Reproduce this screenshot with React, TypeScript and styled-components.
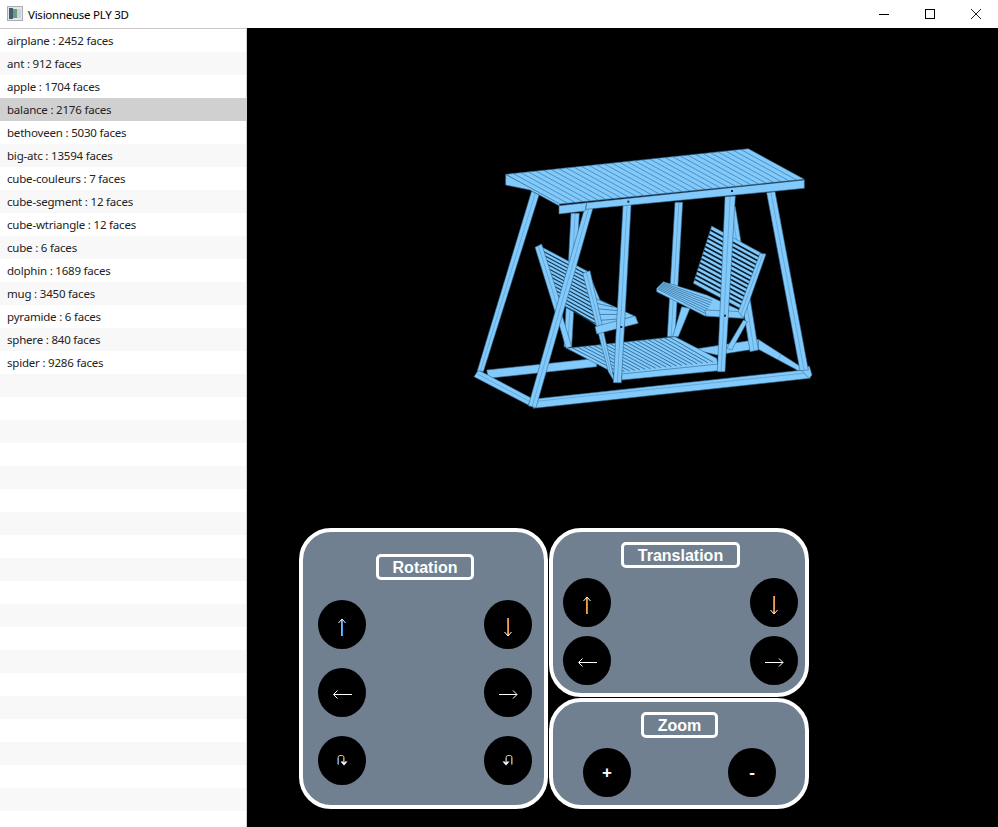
import React from "react";
import styled, { createGlobalStyle } from "styled-components";

const GlobalStyle = createGlobalStyle`
html, body {
    margin: 0;
    padding: 0;
    height: 100%;
    overflow: hidden;
    background: #000;
}
`;

// fichiers PLY chargés dans la liste
const files: string[] = [
    "airplane : 2452 faces",
    "ant : 912 faces",
    "apple : 1704 faces",
    "balance : 2176 faces",
    "bethoveen : 5030 faces",
    "big-atc : 13594 faces",
    "cube-couleurs : 7 faces",
    "cube-segment : 12 faces",
    "cube-wtriangle : 12 faces",
    "cube : 6 faces",
    "dolphin : 1689 faces",
    "mug : 3450 faces",
    "pyramide : 6 faces",
    "sphere : 840 faces",
    "spider : 9286 faces",
];
const ROW_COUNT = 35;

type Pt = [number, number];

const ORANGE = "#f0a050";
const BLUE = "#4aa0f0";

const mix = (a: Pt, b: Pt, t: number): Pt => [a[0] + (b[0] - a[0]) * t, a[1] + (b[1] - a[1]) * t];

// lignes parallèles entre deux bords, pour les lattes
function Slats({ a, b, c, d, n, w = 2, color = "#3a759f" }: { a: Pt; b: Pt; c: Pt; d: Pt; n: number; w?: number; color?: string }) {
    const lines = [];
    for (let i = 1; i < n; i++) {
        const p = mix(a, b, i / n);
        const q = mix(d, c, i / n);
        lines.push(<line key={i} x1={p[0]} y1={p[1]} x2={q[0]} y2={q[1]} strokeWidth={w} />);
    }
    return <g stroke={color}>{lines}</g>;
}

function Beam({ p, mid }: { p: string; mid?: boolean }) {
    const pts = p.split(" ").map((s) => s.split(",").map(Number));
    return (
        <>
            <polygon points={p} />
            {mid && pts.length === 4 && (
                <line
                    x1={(pts[0][0] + pts[1][0]) / 2}
                    y1={(pts[0][1] + pts[1][1]) / 2}
                    x2={(pts[2][0] + pts[3][0]) / 2}
                    y2={(pts[2][1] + pts[3][1]) / 2}
                    stroke="#4a8ab5"
                    strokeWidth={1.5}
                />
            )}
        </>
    );
}

// balançoire : coordonnées du modèle projeté
function SwingModel() {
    return (
        <ModelSvg viewBox="0 0 1080 840" width={360} height={280}>
            <g fill="#82cafc" stroke="#35688c" strokeWidth={1.8} strokeLinejoin="round">
                {/* base arrière */}
                <Beam p="80,690 410,655 410,680 85,715" />
                <Beam p="700,628 895,598 898,625 770,645" />
                <Beam p="895,598 1030,685 1015,692 895,628" mid />
                {/* montants arrière */}
                <Beam p="645,187 668,187 645,590 622,590" mid />
                <Beam p="333,220 358,220 335,620 312,620" mid />
                <Beam p="800,190 826,200 895,630 870,635" mid />
                <Beam p="665,500 690,505 655,590 638,590" />
                <Beam p="850,540 862,545 815,630 800,625" />
                {/* plancher */}
                <polygon points="320,625 645,590 770,655 775,680 485,705 455,695" />
                <Slats a={[320, 625]} b={[645, 590]} c={[775, 665]} d={[462, 698]} n={20} w={2.5} color="#2c5f86" />
                <Beam p="485,702 775,672 775,692 485,720" />
                {/* siège gauche */}
                <polygon points="240,318 385,395 420,480 528,530 530,548 415,560 340,510 290,490" />
                <Slats a={[240, 318]} b={[296, 500]} c={[420, 570]} d={[385, 395]} n={14} w={3.5} color="#173a54" />
                <Slats a={[385, 450]} b={[415, 560]} c={[532, 545]} d={[425, 480]} n={6} color="#2c5f86" />
                <Beam p="225,322 245,312 305,500 285,515" mid />
                <Beam p="285,510 300,505 335,620 318,625" />
                <Beam p="368,400 390,392 465,728 445,695" mid />
                <Beam p="405,560 525,528 535,550 410,582" />
                {/* siège droit */}
                <polygon points="755,258 905,340 850,510 700,430" />
                <Slats a={[755, 258]} b={[700, 430]} c={[850, 510]} d={[905, 340]} n={14} w={5} color="#0b1d2a" />
                <polygon points="590,445 610,425 740,465 850,515 850,535 735,528 590,455" />
                <Slats a={[610, 425]} b={[590, 450]} c={[735, 528]} d={[760, 475]} n={8} color="#2c5f86" />
                <Beam p="735,510 850,515 850,535 738,528" />
                <Beam p="900,340 918,342 850,535 835,515" mid />
                {/* poteaux avant */}
                <Beam p="795,170 826,168 795,695 772,695" mid />
                <Beam p="490,180 514,180 484,728 460,728" mid />
                {/* base avant */}
                <Beam p="42,710 55,690 215,775 205,795" mid />
                <Beam p="215,778 1050,688 1050,715 220,805" />
                <line x1="218" y1="785" x2="1048" y2="698" stroke="#4a8ab5" strokeWidth={1.5} />
                <polygon points="1020,688 1048,678 1056,705 1048,715" />
                {/* pieds latéraux */}
                <Beam p="215,153 237,165 70,695 52,692" mid />
                <Beam p="920,158 945,155 1045,690 1020,692" mid />
                <Beam p="378,190 402,193 228,803 205,797" mid />
                {/* toit */}
                <polygon points="137,103 300,190 297,197 210,150 137,135" />
                <Beam p="297,197 380,188 375,213 297,222" />
                <Beam p="380,188 1033,120 1033,145 378,208" />
                <polygon points="137,103 865,26 1033,118 300,192" />
                <Slats a={[137, 103]} b={[865, 26]} c={[1033, 118]} d={[300, 192]} n={32} w={1.8} color="#2f6890" />
            </g>
            <g fill="#12303f">
                <rect x="502" y="182" width="6" height="6" />
                <rect x="813" y="150" width="6" height="6" />
                <rect x="792" y="524" width="6" height="6" />
                <rect x="481" y="558" width="6" height="6" />
            </g>
        </ModelSvg>
    );
}

function WindowIcon() {
    return (
        <svg width="16" height="16" viewBox="0 0 16 16">
            <rect x="0.5" y="0.5" width="15" height="14" fill="#e4e6e8" stroke="#a9adb2" />
            <rect x="2" y="2" width="4" height="11" fill="#3f5f70" />
            <rect x="6" y="3" width="4" height="9" fill="#6f9a7e" />
            <rect x="10" y="3" width="4" height="9" fill="#c9d4da" />
        </svg>
    );
}

function WindowControls() {
    return (
        <Controls>
            <svg width="10" height="10" viewBox="0 0 10 10">
                <line x1="0" y1="5.5" x2="10" y2="5.5" stroke="#000" />
            </svg>
            <svg width="10" height="10" viewBox="0 0 10 10">
                <rect x="0.5" y="0.5" width="9" height="9" fill="none" stroke="#000" />
            </svg>
            <svg width="10" height="10" viewBox="0 0 10 10">
                <path d="M0 0 L10 10 M10 0 L0 10" stroke="#000" fill="none" strokeWidth="0.9" />
            </svg>
        </Controls>
    );
}

// flèches fines, deux couleurs sur le trait vertical
function Arrow({ dir }: { dir: "up" | "down" | "left" | "right" }) {
    return (
        <svg width="48" height="49" viewBox="0 0 48 49">
            {dir === "up" && (
                <>
                    <rect x="23" y="20" width="1" height="16" fill={ORANGE} />
                    <rect x="24" y="20" width="1" height="16" fill={BLUE} />
                    <path d="M20.5 23 L24 19 L27.5 23" fill="none" stroke="#fff" />
                </>
            )}
            {dir === "down" && (
                <>
                    <rect x="23" y="18" width="1" height="17" fill={BLUE} />
                    <rect x="24" y="18" width="1" height="17" fill={ORANGE} />
                    <path d="M20.5 32 L24 36 L27.5 32" fill="none" stroke="#fff" />
                </>
            )}
            {dir === "left" && (
                <>
                    <rect x="16" y="26" width="18" height="1" fill="#fff" />
                    <path d="M19.5 22.5 L15.5 26.5 L19.5 30.5" fill="none" stroke="#fff" />
                </>
            )}
            {dir === "right" && (
                <>
                    <rect x="15" y="26" width="18" height="1" fill="#fff" />
                    <path d="M29 22.5 L33 26.5 L29 30.5" fill="none" stroke="#fff" />
                </>
            )}
        </svg>
    );
}

// flèche en U, sens horaire ou non
function UTurn({ flip }: { flip?: boolean }) {
    return (
        <svg width="12" height="13" viewBox="0 0 12 13" style={{ transform: flip ? "scaleX(-1)" : undefined }}>
            <path d="M2 10.5 V3.5 Q2 1.5 4 1.5 H6 Q8 1.5 8 3.5 V10" fill="none" stroke="#f2b56b" strokeWidth="1" />
            <path d="M2.5 10.5 V3.5 M7.5 3.5 V10" fill="none" stroke="#7db7f0" strokeWidth="0.8" />
            <path d="M4.5 7.5 L8 11.5 L11.5 7.5 H9 L8 9 L7 7.5 Z" fill="#fff" />
        </svg>
    );
}

export default function App() {
    return (
        <>
            <GlobalStyle />
            <Window>
                <TitleBar>
                    <WindowIcon />
                    <Title>Visionneuse PLY 3D</Title>
                    <WindowControls />
                </TitleBar>
                <Body>
                    <FileList>
                        {Array.from({ length: ROW_COUNT }).map((_, i) => (
                            <FileRow key={i} $alt={i % 2 === 1} $selected={i === 3}>
                                {files[i] ?? ""}
                            </FileRow>
                        ))}
                    </FileList>
                    <Viewport>
                        <SwingModel />
                        <ControlDeck>
                            <RotationPanel>
                                <PanelLabel $width={98}>Rotation</PanelLabel>
                                <RotationGrid>
                                    <RoundButton><Arrow dir="up" /></RoundButton>
                                    <RoundButton><Arrow dir="down" /></RoundButton>
                                    <RoundButton><Arrow dir="left" /></RoundButton>
                                    <RoundButton><Arrow dir="right" /></RoundButton>
                                    <RoundButton><UTurn /></RoundButton>
                                    <RoundButton><UTurn flip /></RoundButton>
                                </RotationGrid>
                            </RotationPanel>
                            <TranslationPanel>
                                <PanelLabel $width={119}>Translation</PanelLabel>
                                <TranslationGrid>
                                    <RoundButton><Arrow dir="up" /></RoundButton>
                                    <RoundButton><Arrow dir="down" /></RoundButton>
                                    <RoundButton><Arrow dir="left" /></RoundButton>
                                    <RoundButton><Arrow dir="right" /></RoundButton>
                                </TranslationGrid>
                            </TranslationPanel>
                            <ZoomPanel>
                                <PanelLabel $width={77}>Zoom</PanelLabel>
                                <ZoomRow>
                                    <RoundButton>+</RoundButton>
                                    <RoundButton>-</RoundButton>
                                </ZoomRow>
                            </ZoomPanel>
                        </ControlDeck>
                    </Viewport>
                </Body>
            </Window>
        </>
    );
}

const Window = styled.div`
display: flex;
flex-direction: column;
width: 998px;
height: 827px;
overflow: hidden;
`;

const TitleBar = styled.div`
display: flex;
align-items: center;
flex: none;
height: 28px;
padding-left: 7px;
box-sizing: border-box;

background-color: #fff;
`;

const Title = styled.span`
margin-left: 5px;

color: #000;
font-family: "Noto Sans", sans-serif;
font-size: 11.5px;
letter-spacing: -0.25px;
`;

const Controls = styled.div`
display: flex;
align-items: center;
gap: 36px;
margin-left: auto;
margin-right: 17px;
`;

const Body = styled.div`
display: flex;
flex: 1;
min-height: 0;
`;

const FileList = styled.div`
flex: none;
width: 247px;
box-sizing: border-box;
overflow: hidden;

background-color: #fff;

border-top: 1px solid #c8c8c8;
border-right: 1px solid #d0d0d0;
`;

const FileRow = styled.div<{ $alt: boolean; $selected: boolean }>`
height: 23px;
padding-left: 7px;

background-color: ${(p) => (p.$selected ? "#d0d0d0" : p.$alt ? "#f8f8f8" : "#fff")};
color: #222;

font-family: "Noto Sans", sans-serif;
font-size: 11.5px;
letter-spacing: -0.2px;
line-height: 24px;
white-space: nowrap;
`;

const Viewport = styled.div`
flex: 1;
min-width: 0;
padding: 112px 0 0 213px;
box-sizing: border-box;

background-color: #000;
`;

const ModelSvg = styled.svg`
display: block;
`;

const ControlDeck = styled.div`
display: grid;
grid-template-columns: 249px 260px;
grid-template-rows: 169px 111px;
gap: 1px;
margin-top: 108px;
margin-left: -161px;
`;

const Panel = styled.div`
display: flex;
flex-direction: column;
align-items: center;
box-sizing: border-box;

background-color: #708090;

border: 4px solid #fff;
border-radius: 32px;
`;

const RotationPanel = styled(Panel)`
grid-row: 1 / span 2;
padding: 22px 12px 0 15px;
`;

const TranslationPanel = styled(Panel)`
padding: 10px 7px 0 10px;
`;

const ZoomPanel = styled(Panel)`
padding: 10px 29px 0 30px;
`;

const PanelLabel = styled.div<{ $width: number }>`
flex: none;
width: ${(p) => p.$width}px;
height: 26px;
box-sizing: border-box;

color: #fff;

border: 3px solid #fff;
border-radius: 5px;

font-family: "Liberation Sans", Arial, sans-serif;
font-size: 16px;
font-weight: bold;
line-height: 21px;
text-align: center;
`;

const RotationGrid = styled.div`
display: grid;
grid-template-columns: 48px 48px;
justify-content: space-between;
row-gap: 19px;
width: 100%;
margin-top: 20px;
`;

const TranslationGrid = styled.div`
display: grid;
grid-template-columns: 48px 48px;
justify-content: space-between;
row-gap: 9px;
width: 100%;
margin-top: 10px;
`;

const ZoomRow = styled.div`
display: flex;
justify-content: space-between;
width: 100%;
margin-top: 10px;
`;

const RoundButton = styled.div`
display: flex;
justify-content: center;
align-items: center;
width: 48px;
height: 49px;

background-color: #000;
color: #fff;

border-radius: 50%;

font-family: "Liberation Sans", Arial, sans-serif;
font-size: 17px;
font-weight: bold;
`;
